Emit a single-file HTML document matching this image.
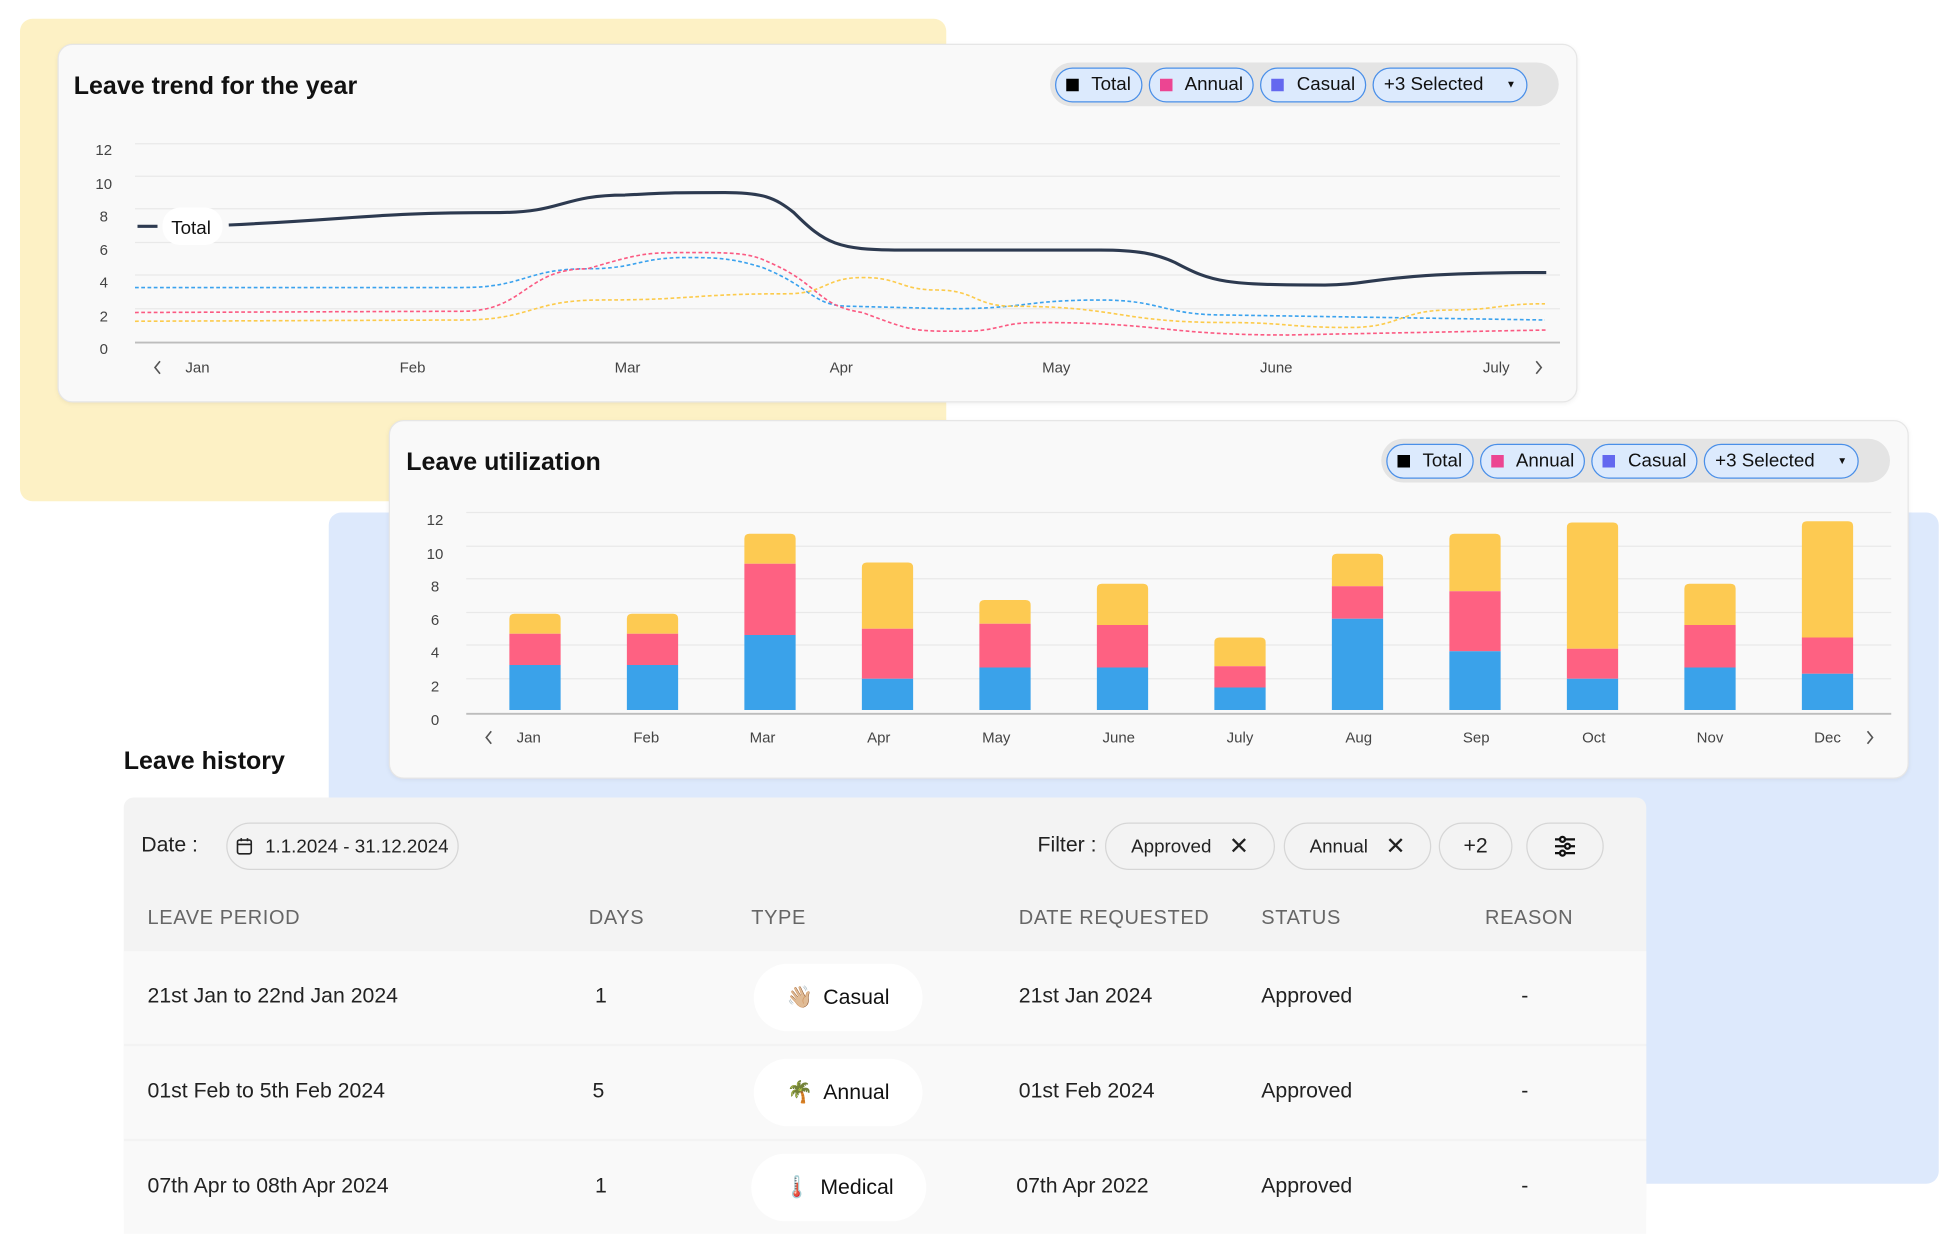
<!DOCTYPE html>
<html><head><meta charset="utf-8"><style>
*{margin:0;padding:0;box-sizing:border-box}
html,body{width:1950px;height:1200px;overflow:hidden;background:#fff;font-family:"Liberation Sans",sans-serif;color:#111}
#w{position:absolute;left:0;top:0;width:1560px;height:960px;transform:scale(1.25);transform-origin:0 0}
.a{position:absolute}
.card{position:absolute;background:#f9f9f9;border:1px solid #e6e6e6;border-radius:12px;box-shadow:0 1px 4px rgba(0,0,0,.06)}
.title{position:absolute;font-weight:bold;font-size:20px;color:#111}
.chips{position:absolute;height:35px;background:#e4e4e4;border-radius:18px;display:flex;align-items:center;padding:0 4px;gap:5px}
.chip{height:28px;border:1.5px solid #4a8fe8;background:#dceafd;border-radius:14px;display:flex;align-items:center;padding:0 8px;font-size:15px;color:#111;gap:10px}
.sq{width:10px;height:10px;display:inline-block}
svg{position:absolute}
svg text{font-family:"Liberation Sans",sans-serif;font-size:12px;fill:#444}
.pill{position:absolute;height:38px;border:1.5px solid #d6d6d6;border-radius:19px;display:flex;align-items:center;justify-content:center;font-size:15px;color:#222;gap:14px}
.h{position:absolute;top:726px;font-size:16px;color:#666;letter-spacing:.5px}
.row{position:absolute;left:99px;width:1218px;height:74px;background:#f9f9f9}
.cell{position:absolute;font-size:17px;color:#222}
.type{position:absolute;height:54px;width:135px;background:#fff;border-radius:27px;display:flex;align-items:center;justify-content:center;font-size:17px;gap:8px}
</style></head><body><div id="w">
<div class="a" style="left:16px;top:15px;width:741px;height:386px;background:#fdf1c5;border-radius:10px"></div>
<div class="a" style="left:263px;top:410px;width:1288px;height:537px;background:#dde9fc;border-radius:10px"></div>

<div class="card" style="left:46px;top:35px;width:1216px;height:287px"></div>
<div class="title" style="left:59px;top:58px">Leave trend for the year</div>
<div class="chips" style="left:840px;top:50px;width:407px">
<div class="chip"><span class="sq" style="background:#000"></span>Total</div>
<div class="chip"><span class="sq" style="background:#ec4592"></span>Annual</div>
<div class="chip"><span class="sq" style="background:#6468ef"></span>Casual</div>
<div class="chip" style="gap:18px">+3 Selected <span style="font-size:8px">▼</span></div>
</div>
<svg style="left:46px;top:35px" width="1216" height="287" viewBox="46 35 1216 287">
<g stroke="#e9e9e9" stroke-width="1">
<line x1="108" x2="1248" y1="115" y2="115"/><line x1="108" x2="1248" y1="141" y2="141"/><line x1="108" x2="1248" y1="167" y2="167"/><line x1="108" x2="1248" y1="194" y2="194"/><line x1="108" x2="1248" y1="220" y2="220"/><line x1="108" x2="1248" y1="247" y2="247"/></g>
<line x1="108" x2="1248" y1="274" y2="274" stroke="#bdbdbd" stroke-width="1.5"/>
<g text-anchor="middle"><text x="83" y="124">12</text><text x="83" y="151">10</text><text x="83" y="177">8</text><text x="83" y="204">6</text><text x="83" y="230">4</text><text x="83" y="257">2</text><text x="83" y="283">0</text>
<text x="158" y="298">Jan</text><text x="330" y="298">Feb</text><text x="502" y="298">Mar</text><text x="673" y="298">Apr</text><text x="845" y="298">May</text><text x="1021" y="298">June</text><text x="1197" y="298">July</text></g>
<path d="M128 289 l-4 5 l4 5 M1229 289 l4 5 l-4 5" stroke="#555" fill="none" stroke-width="1.3"/>
<g fill="none" stroke-width="1.3" stroke-dasharray="3 2">
<path stroke="#3aa2ee" d="M108 230 L370 230 C420 230 420 215 470 215 C510 215 510 206 550 206 C580 206 590 208 610 214 C650 230 650 245 680 245 L760 247 C820 247 820 240 880 240 C930 240 930 252 980 252 L1236 256"/>
<path stroke="#fb5a82" d="M108 250 L370 249 C420 249 420 215 470 215 C515 202 515 202 560 202 C600 202 605 205 620 212 C655 228 655 245 690 250 C730 265 730 265 770 265 C800 265 800 258 830 258 C930 258 930 268 1030 268 L1237 264"/>
<path stroke="#fccb4c" d="M108 257 L370 256 C425 256 425 240 480 240 C555 240 555 235 630 235 C660 235 660 222 690 222 C720 222 720 232 750 232 C780 232 780 245 810 245 C895 245 895 258 980 258 C1030 258 1030 262 1080 262 C1120 262 1120 248 1160 248 C1198 248 1198 243 1236 243"/>
</g>
<path fill="none" stroke="#2d3a50" stroke-width="2.5" d="M183 180 C290 175 300 170 400 170 C450 170 450 156 500 156 C540 154 540 154 580 154 C610 154 620 158 635 170 C660 195 670 200 720 200 L880 200 C910 200 925 203 940 210 C970 226 980 228 1060 228 C1100 228 1100 218 1237 218"/>
<line x1="110" x2="126" y1="181" y2="181" stroke="#2d3a50" stroke-width="2.5"/>
<rect x="130" y="166" width="48" height="30" rx="14" fill="#fff"/>
<text x="137" y="187" style="font-size:15px;fill:#111">Total</text>
</svg>

<div class="card" style="left:311px;top:336px;width:1216px;height:287px"></div>
<div class="title" style="left:325px;top:359px">Leave utilization</div>
<div class="chips" style="left:1105px;top:351px;width:407px">
<div class="chip"><span class="sq" style="background:#000"></span>Total</div>
<div class="chip"><span class="sq" style="background:#ec4592"></span>Annual</div>
<div class="chip"><span class="sq" style="background:#6468ef"></span>Casual</div>
<div class="chip" style="gap:18px">+3 Selected <span style="font-size:8px">▼</span></div>
</div>
<svg style="left:311px;top:336px" width="1216" height="287" viewBox="311 336 1216 287">
<g stroke="#e9e9e9"><line x1="373" x2="1513" y1="410" y2="410"/><line x1="373" x2="1513" y1="437" y2="437"/><line x1="373" x2="1513" y1="463" y2="463"/><line x1="373" x2="1513" y1="490" y2="490"/><line x1="373" x2="1513" y1="516" y2="516"/><line x1="373" x2="1513" y1="543" y2="543"/></g>
<line x1="373" x2="1513" y1="571" y2="571" stroke="#bdbdbd" stroke-width="1.5"/>
<g text-anchor="middle"><text x="348" y="420">12</text><text x="348" y="447">10</text><text x="348" y="473">8</text><text x="348" y="500">6</text><text x="348" y="526">4</text><text x="348" y="553">2</text><text x="348" y="580">0</text>
<text x="423" y="594">Jan</text><text x="517" y="594">Feb</text><text x="610" y="594">Mar</text><text x="703" y="594">Apr</text><text x="797" y="594">May</text><text x="895" y="594">June</text><text x="992" y="594">July</text><text x="1087" y="594">Aug</text><text x="1181" y="594">Sep</text><text x="1275" y="594">Oct</text><text x="1368" y="594">Nov</text><text x="1462" y="594">Dec</text></g>
<path d="M393 585 l-4 5 l4 5 M1494 585 l4 5 l-4 5" stroke="#555" fill="none" stroke-width="1.3"/>
<g id="bars"></g>
</svg>

<div class="title" style="left:99px;top:598px">Leave history</div>
<div class="a" style="left:99px;top:638px;width:1218px;height:330px;background:#f3f3f3;border-radius:8px 8px 0 0"></div>
<div class="cell" style="left:113px;top:666px">Date :</div>
<div class="pill" style="left:181px;top:658px;width:186px;gap:10px"><svg style="position:static" width="13" height="14" viewBox="0 0 13 14"><rect x="1" y="2" width="11" height="11" rx="1.5" fill="none" stroke="#222" stroke-width="1.3"/><line x1="1" x2="12" y1="5.5" y2="5.5" stroke="#222" stroke-width="1.3"/><line x1="4" x2="4" y1="0.5" y2="3" stroke="#222" stroke-width="1.3"/><line x1="9" x2="9" y1="0.5" y2="3" stroke="#222" stroke-width="1.3"/></svg>1.1.2024 - 31.12.2024</div>
<div class="cell" style="left:830px;top:666px">Filter :</div>
<div class="pill" style="left:884px;top:658px;width:136px">Approved <span style="font-size:19px">✕</span></div>
<div class="pill" style="left:1027px;top:658px;width:118px">Annual <span style="font-size:19px">✕</span></div>
<div class="pill" style="left:1151px;top:658px;width:59px;font-size:17px">+2</div>
<div class="pill" style="left:1221px;top:658px;width:62px"><svg style="position:static" width="18" height="18" viewBox="0 0 18 18" fill="none" stroke="#111" stroke-width="1.8"><line x1="1" x2="17" y1="3.5" y2="3.5"/><line x1="1" x2="17" y1="9" y2="9"/><line x1="1" x2="17" y1="14.5" y2="14.5"/><circle cx="7" cy="3.5" r="2" fill="#f3f3f3"/><circle cx="11" cy="9" r="2" fill="#f3f3f3"/><circle cx="7" cy="14.5" r="2" fill="#f3f3f3"/></svg></div>
<div class="h" style="left:118px">LEAVE PERIOD</div><div class="h" style="left:471px">DAYS</div><div class="h" style="left:601px">TYPE</div><div class="h" style="left:815px">DATE REQUESTED</div><div class="h" style="left:1009px">STATUS</div><div class="h" style="left:1188px">REASON</div>

<div class="row" style="top:761px"></div><div class="row" style="top:837px"></div><div class="row" style="top:913px"></div>
<div class="cell" style="left:118px;top:787px">21st Jan to 22nd Jan 2024</div><div class="cell" style="left:476px;top:787px">1</div>
<div class="type" style="left:603px;top:771px"><span>👋🏼</span>Casual</div>
<div class="cell" style="left:815px;top:787px">21st Jan 2024</div><div class="cell" style="left:1009px;top:787px">Approved</div><div class="cell" style="left:1217px;top:787px">-</div>
<div class="cell" style="left:118px;top:863px">01st Feb to 5th Feb 2024</div><div class="cell" style="left:474px;top:863px">5</div>
<div class="type" style="left:603px;top:847px"><span>🌴</span>Annual</div>
<div class="cell" style="left:815px;top:863px">01st Feb 2024</div><div class="cell" style="left:1009px;top:863px">Approved</div><div class="cell" style="left:1217px;top:863px">-</div>
<div class="cell" style="left:118px;top:939px">07th Apr to 08th Apr 2024</div><div class="cell" style="left:476px;top:939px">1</div>
<div class="type" style="left:601px;top:923px;width:140px"><span>🌡️</span>Medical</div>
<div class="cell" style="left:813px;top:939px">07th Apr 2022</div><div class="cell" style="left:1009px;top:939px">Approved</div><div class="cell" style="left:1217px;top:939px">-</div>
</div>
<script>
var d=[[428,532,507,491],[522,532,507,491],[616,508,451,427],[710,543,503,450],[804,534,499,480],[898,534,500,467],[992,550,533,510],[1086,495,469,443],[1180,521,473,427],[1274,543,519,418],[1368,534,500,467],[1462,539,510,417]];
var s='';d.forEach(function(b){var x=b[0]-20.5,w=41,base=568;
s+='<path fill="#fdca52" d="M'+x+' '+b[2]+'V'+(b[3]+4)+'q0 -4 4 -4h'+(w-8)+'q4 0 4 4V'+b[2]+'z"/>';
s+='<rect fill="#fe6182" x="'+x+'" y="'+b[2]+'" width="'+w+'" height="'+(b[1]-b[2])+'"/>';
s+='<rect fill="#3aa2ea" x="'+x+'" y="'+b[1]+'" width="'+w+'" height="'+(base-b[1])+'"/>';});
document.getElementById('bars').innerHTML=s;
</script>
</body></html>
